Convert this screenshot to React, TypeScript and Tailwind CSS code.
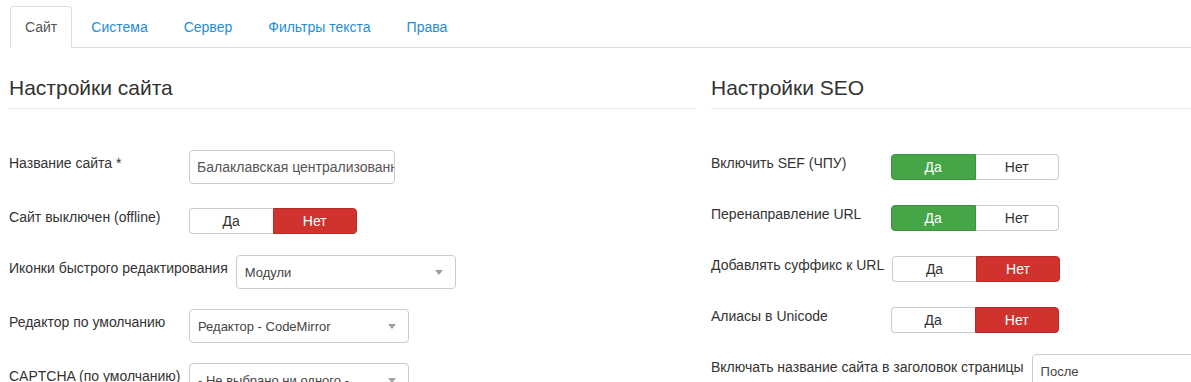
import React from 'react';

type Row =
  | { kind: 'text'; label: string; value: string; w: number }
  | { kind: 'toggle'; label: string; on: boolean }
  | { kind: 'select'; label: string; value: string; w: number };

const tabs = ['Сайт', 'Система', 'Сервер', 'Фильтры текста', 'Права'];

const siteRows: Row[] = [
  { kind: 'text', label: 'Название сайта *', value: 'Балаклавская централизованная библиотечная система', w: 206 },
  { kind: 'toggle', label: 'Сайт выключен (offline)', on: false },
  { kind: 'select', label: 'Иконки быстрого редактирования', value: 'Модули', w: 220 },
  { kind: 'select', label: 'Редактор по умолчанию', value: 'Редактор - CodeMirror', w: 220 },
  { kind: 'select', label: 'CAPTCHA (по умолчанию)', value: '- Не выбрано ни одного -', w: 220 },
];

const seoRows: Row[] = [
  { kind: 'toggle', label: 'Включить SEF (ЧПУ)', on: true },
  { kind: 'toggle', label: 'Перенаправление URL', on: true },
  { kind: 'toggle', label: 'Добавлять суффикс к URL', on: false },
  { kind: 'toggle', label: 'Алиасы в Unicode', on: false },
  { kind: 'select', label: 'Включать название сайта в заголовок страницы', value: 'После', w: 220 },
];

const Toggle: React.FC<{ on: boolean }> = ({ on }) => (
  <div className="flex h-[26px] w-[168px] text-[14px] leading-[24px]">
    <span
      className={`flex-1 text-center rounded-l-[4px] border ${
        on ? 'bg-[#46a546] border-[#3f8f3f] text-white' : 'bg-white border-[#cccccc] border-r-0 text-[#333333]'
      }`}
    >
      Да
    </span>
    <span
      className={`flex-1 text-center rounded-r-[4px] border ${
        on ? 'bg-white border-[#cccccc] border-l-0 text-[#333333]' : 'bg-[#d0322d] border-[#b52b27] text-white'
      }`}
    >
      Нет
    </span>
  </div>
);

const Control: React.FC<{ row: Row }> = ({ row }) => {
  if (row.kind === 'toggle') {
    return (
      <div className="h-[31px] pt-[4px]">
        <Toggle on={row.on} />
      </div>
    );
  }
  if (row.kind === 'text') {
    return (
      <div
        className="h-[34px] border border-[#cccccc] rounded-[4px] px-[7px] text-[14px] leading-[32px] text-[#555555] overflow-hidden whitespace-nowrap"
        style={{ width: row.w }}
      >
        {row.value}
      </div>
    );
  }
  return (
    <div
      className="h-[34px] border border-[#cccccc] rounded-[4px] pl-[8px] pr-[12px] flex items-center justify-between text-[13px] text-[#444444] whitespace-nowrap overflow-hidden bg-white"
      style={{ width: row.w }}
    >
      <span className="pt-[2px]">{row.value}</span>
      <svg width="8" height="5" viewBox="0 0 8 5" className="shrink-0">
        <path d="M0 0h8L4 5z" fill="#a0a0a0" />
      </svg>
    </div>
  );
};

const Section: React.FC<{ title: string; rows: Row[] }> = ({ title, rows }) => (
  <div className="w-[687px] shrink-0">
    <h2 className="mt-[28px] pb-[8px] border-b border-[#e5e5e5] text-[21px] leading-[24px] font-normal text-[#333333]">
      {title}
    </h2>
    <div className="mt-[41px] flex flex-col gap-[20px]">
      {rows.map((row) => (
        <div key={row.label} className="flex items-start">
          <label className="min-w-[180px] pr-[8px] pt-[4px] text-[14px] leading-[18px] text-[#333333] whitespace-nowrap">
            {row.label}
          </label>
          <Control row={row} />
        </div>
      ))}
    </div>
  </div>
);

export default function App() {
  return (
    <div
      className="w-[1191px] h-[382px] overflow-hidden bg-white"
      style={{ fontFamily: '"Liberation Sans", Arial, sans-serif' }}
    >
      <ul className="mt-[6px] ml-[10px] flex border-b border-[#dddddd] text-[14px]">
        {tabs.map((t, i) => (
          <li key={t} className={`-mb-px ${i === 0 ? 'mr-[3px]' : 'mr-[4px]'}`}>
            <span
              className={`block py-[10px] leading-[20px] border rounded-t-[4px] ${
                i === 0
                  ? 'px-[14px] border-[#dddddd] border-b-white bg-white text-[#555555]'
                  : 'px-[15px] border-transparent text-[#1f8dd6]'
              }`}
            >
              {t}
            </span>
          </li>
        ))}
      </ul>
      <div className="flex gap-[15px] pl-[9px]">
        <Section title="Настройки сайта" rows={siteRows} />
        <Section title="Настройки SEO" rows={seoRows} />
      </div>
    </div>
  );
}
